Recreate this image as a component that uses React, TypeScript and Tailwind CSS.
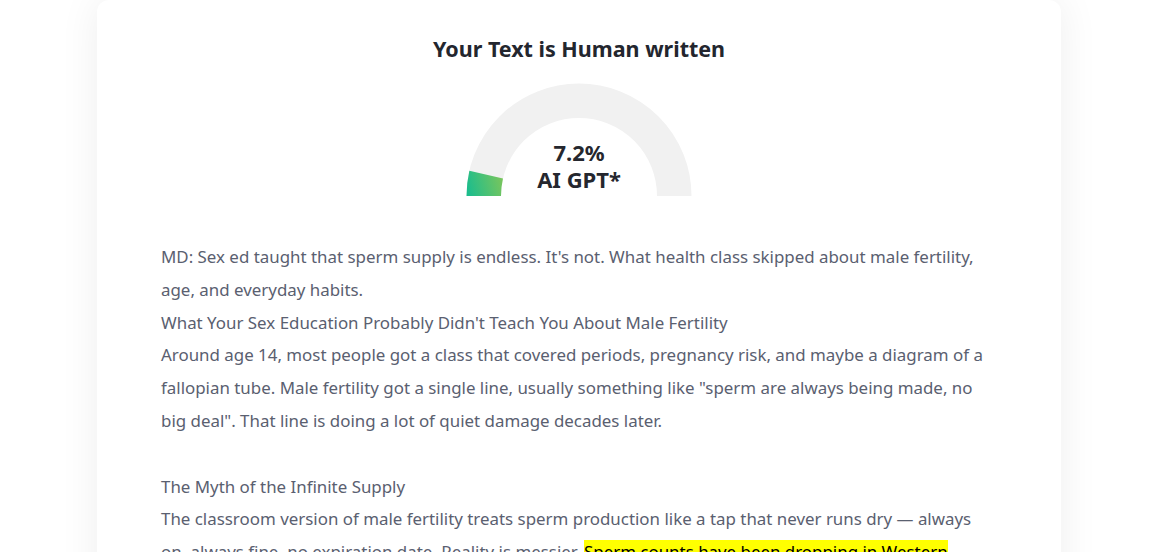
import React from 'react'

const body = `MD: Sex ed taught that sperm supply is endless. It's not. What health class skipped about male fertility, age, and everyday habits.
What Your Sex Education Probably Didn't Teach You About Male Fertility
Around age 14, most people got a class that covered periods, pregnancy risk, and maybe a diagram of a fallopian tube. Male fertility got a single line, usually something like "sperm are always being made, no big deal". That line is doing a lot of quiet damage decades later.

The Myth of the Infinite Supply
The classroom version of male fertility treats sperm production like a tap that never runs dry — always on, always fine, no expiration date. Reality is messier. `

function Gauge({ pct }: { pct: number }) {
  const cx = 113
  const cy = 113
  const r = 95.25
  const a = Math.PI - (pct / 100) * Math.PI
  const ex = cx + r * Math.cos(a)
  const ey = cy - r * Math.sin(a)
  return (
    <div className="relative w-[226px] h-[113px]">
      <svg width="226" height="113" viewBox="0 0 226 113">
        <defs>
          <linearGradient id="g" gradientUnits="userSpaceOnUse" x1="0" y1="100" x2="38" y2="90">
            <stop offset="0%" stopColor="#1dbd8c" />
            <stop offset="100%" stopColor="#80c659" />
          </linearGradient>
        </defs>
        <path
          d={`M ${cx - r} ${cy} A ${r} ${r} 0 0 1 ${cx + r} ${cy}`}
          fill="none"
          stroke="#f1f1f1"
          strokeWidth="34.5"
        />
        <path
          d={`M ${cx - r} ${cy} A ${r} ${r} 0 0 1 ${ex} ${ey}`}
          fill="none"
          stroke="url(#g)"
          strokeWidth="34.5"
        />
      </svg>
      <div className="absolute left-0 right-0 top-[56px] text-center text-[22px] leading-[27px] font-bold text-[#25272e]">
        <div>7.2%</div>
        <div>AI GPT*</div>
      </div>
    </div>
  )
}

export default function App() {
  return (
    <div className="min-h-[552px] bg-white font-['Noto_Sans',sans-serif] overflow-hidden">
      <div className="ml-[97px] w-[964px] bg-white rounded-xl shadow-[0_0_40px_rgba(0,0,0,0.07)] px-16 pt-[35px] pb-10">
        <h2 className="text-center text-[21.5px] leading-[28px] font-bold text-[#23262e]">Your Text is Human written</h2>
        <div className="flex justify-center mt-[20px]">
          <Gauge pct={7.2} />
        </div>
        <p className="mt-[45px] text-[16.9px] leading-[32.8px] text-[#5a6070] whitespace-pre-line">
          {body}
          <span className="bg-[#ffff00] text-black">Sperm counts have been dropping in Western countries for decades.</span>
        </p>
      </div>
    </div>
  )
}
